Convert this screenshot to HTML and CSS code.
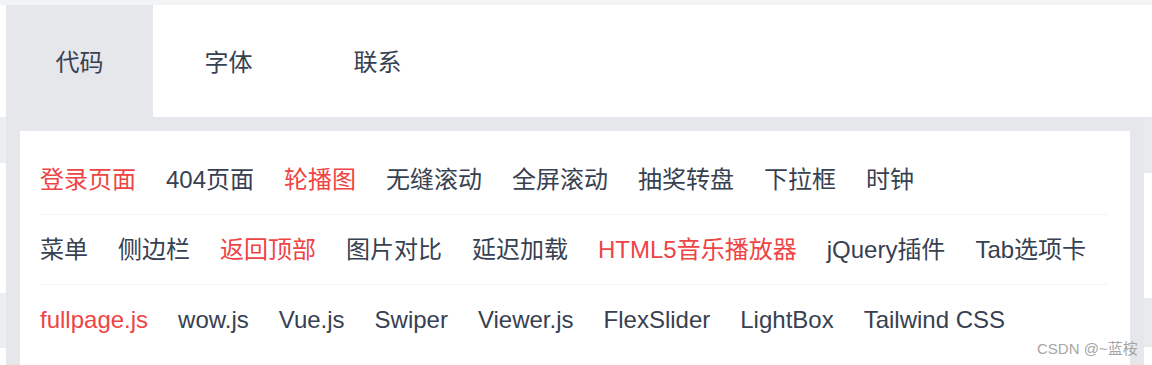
FILE: index.html
```html
<!DOCTYPE html>
<html lang="zh-CN">
<head>
<meta charset="utf-8">
<title>导航</title>
<link rel="stylesheet" href="styles.css">
</head>
<body>
<div class="page">
  <nav class="tabs">
    <div class="tab active">代码</div>
    <div class="tab">字体</div>
    <div class="tab">联系</div>
  </nav>
  <section class="panel">
    <div class="card">
      <div class="row">
        <a class="link hot">登录页面</a>
        <a class="link">404页面</a>
        <a class="link hot">轮播图</a>
        <a class="link">无缝滚动</a>
        <a class="link">全屏滚动</a>
        <a class="link">抽奖转盘</a>
        <a class="link">下拉框</a>
        <a class="link">时钟</a>
      </div>
      <div class="row">
        <a class="link">菜单</a>
        <a class="link">侧边栏</a>
        <a class="link hot">返回顶部</a>
        <a class="link">图片对比</a>
        <a class="link">延迟加载</a>
        <a class="link hot">HTML5音乐播放器</a>
        <a class="link">jQuery插件</a>
        <a class="link">Tab选项卡</a>
      </div>
      <div class="row">
        <a class="link hot">fullpage.js</a>
        <a class="link">wow.js</a>
        <a class="link">Vue.js</a>
        <a class="link">Swiper</a>
        <a class="link">Viewer.js</a>
        <a class="link">FlexSlider</a>
        <a class="link">LightBox</a>
        <a class="link">Tailwind CSS</a>
      </div>
    </div>
  </section>
</div>
<div class="watermark">CSDN @~蓝桉</div>
</body>
</html>
```
FILE: styles.css
```css
html, body {
  margin: 0;
  padding: 0;
}

body {
  height: 365px;
  overflow: hidden;
  position: relative;
  font-family: "Liberation Sans", "Noto Sans CJK SC", sans-serif;
  background:
    linear-gradient(to bottom,
      #f2f3f5 0 5px,
      #ffffff 5px 117px,
      #eceef1 117px 163px,
      #ffffff 163px 293px,
      #eceef1 293px 348px,
      #ffffff 348px) left top / 50% 100% no-repeat,
    linear-gradient(to bottom,
      #f2f3f5 0 5px,
      #ffffff 5px 117px,
      #e8eaed 117px 173px,
      #ffffff 173px 298px,
      #e8eaed 298px 347px,
      #ffffff 347px) right top / 50% 100% no-repeat;
}

.page {
  padding-top: 5px;
}

.tabs {
  display: flex;
  gap: 2px;
  height: 112px;
  padding-left: 6px;
  background: #ffffff;
}

.tab {
  width: 147px;
  display: flex;
  align-items: center;
  justify-content: center;
  font-size: 24px;
  color: #374151;
  padding-bottom: 2px;
  box-sizing: border-box;
}

.tab.active {
  background: #e5e7eb;
}

.panel {
  margin: 0 8px 0 6px;
  height: 248px;
  padding: 14px 14px 0;
  box-sizing: border-box;
  background: #e5e7eb;
}

.card {
  height: 100%;
  box-sizing: border-box;
  padding: 14px 22px 0 20px;
  background: #ffffff;
}

.row {
  display: flex;
  flex-wrap: wrap;
  column-gap: 30px;
  padding: 18px 0;
  line-height: 33px;
  font-size: 24px;
  border-bottom: 1px solid #f3f4f6;
}

.row:last-child {
  border-bottom: none;
}

.link {
  color: #374151;
  text-decoration: none;
  white-space: nowrap;
}

.link.hot {
  color: #ef4444;
}

.watermark {
  position: absolute;
  left: 1037px;
  top: 340px;
  font-size: 15px;
  line-height: 17px;
  color: #a6a6a6;
  white-space: nowrap;
}
```
